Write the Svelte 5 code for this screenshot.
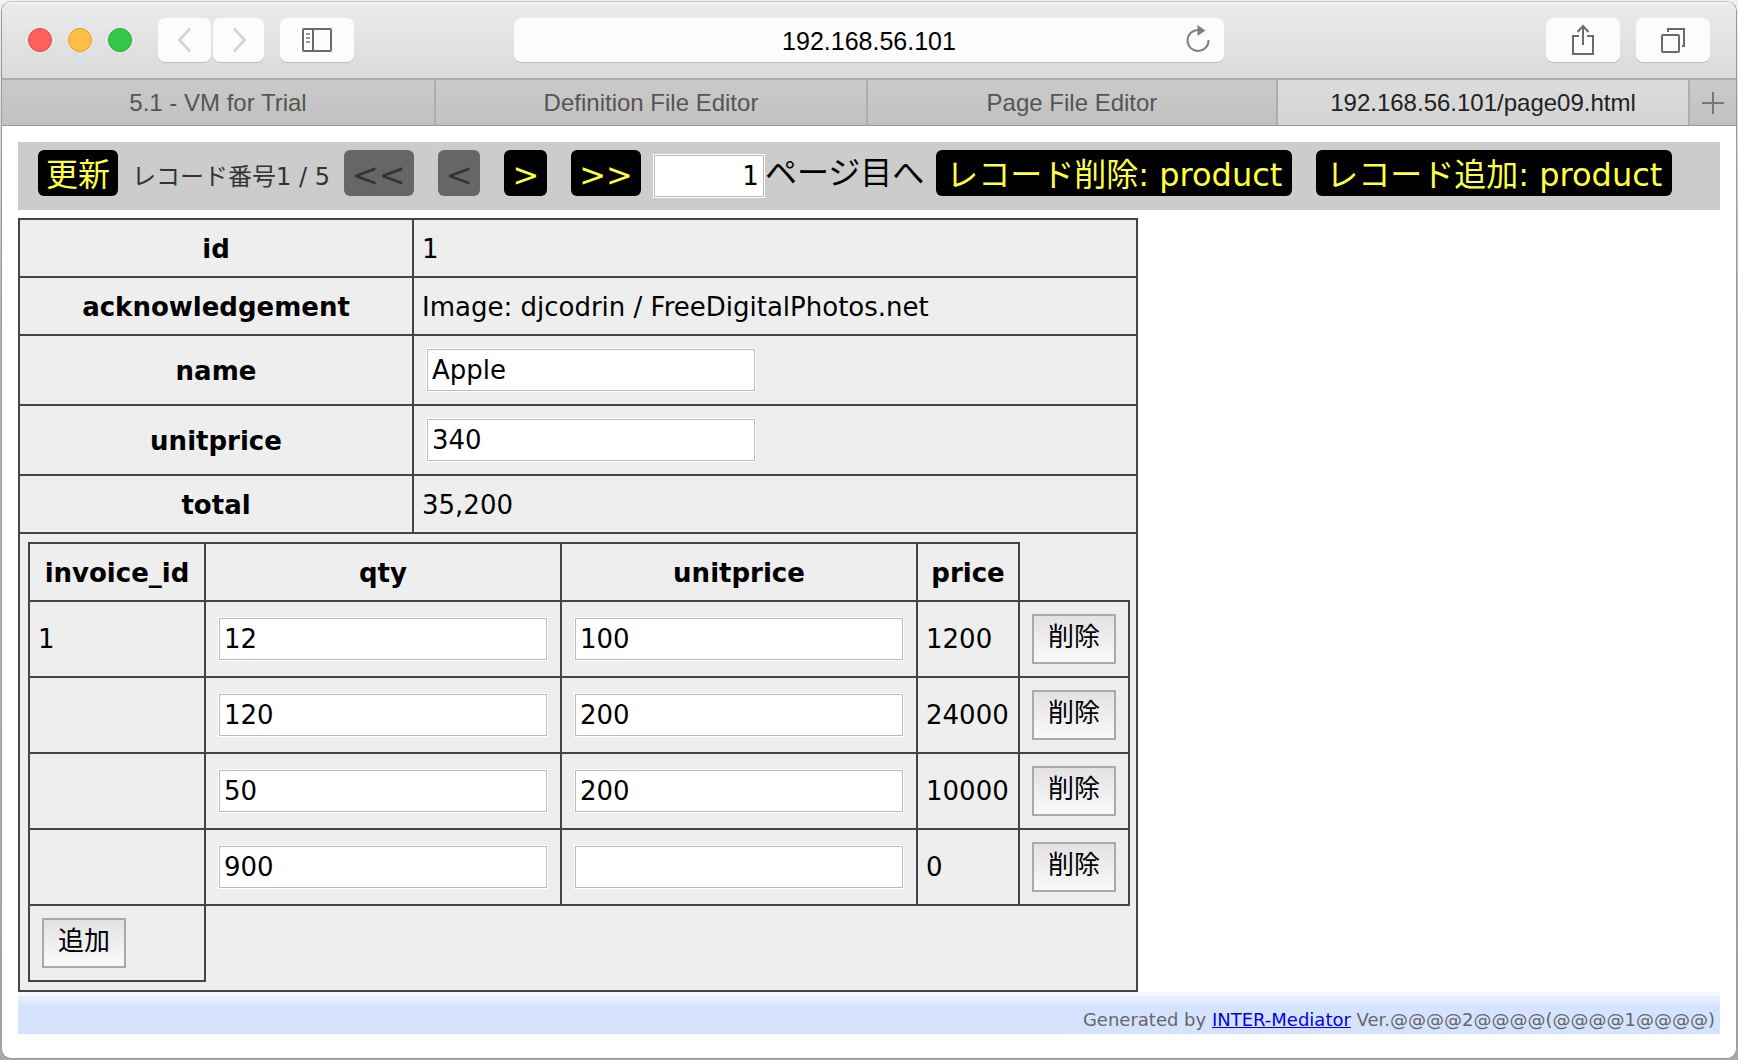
<script>
  const tabs = [
    { title: '5.1 - VM for Trial', active: false },
    { title: 'Definition File Editor', active: false },
    { title: 'Page File Editor', active: false },
    { title: '192.168.56.101/page09.html', active: true }
  ];

  let page = $state('1');
  let product = $state({ name: 'Apple', unitprice: '340' });
  let lines = $state([
    { invoice: '1', qty: '12', unitprice: '100', price: '1200' },
    { invoice: '', qty: '120', unitprice: '200', price: '24000' },
    { invoice: '', qty: '50', unitprice: '200', price: '10000' },
    { invoice: '', qty: '900', unitprice: '', price: '0' }
  ]);
</script>

<div class="window">
  <header class="toolbar">
    <div class="lights">
      <button class="light red" aria-label="Close"></button>
      <button class="light amber" aria-label="Minimize"></button>
      <button class="light green" aria-label="Zoom"></button>
    </div>
    <div class="history">
      <button class="tool back" aria-label="Back">
        <svg width="16" height="28" viewBox="0 0 16 28"><path d="M13 2.500 2.500 14 13 25.500" fill="none" stroke="#d6d6d6" stroke-width="3" /></svg>
      </button>
      <button class="tool forward" aria-label="Forward">
        <svg width="16" height="28" viewBox="0 0 16 28"><path d="M3 2.500 13.500 14 3 25.500" fill="none" stroke="#d6d6d6" stroke-width="3" /></svg>
      </button>
    </div>
    <button class="tool sidebar" aria-label="Sidebar">
      <svg width="32" height="24" viewBox="0 0 32 24" fill="none" stroke="#6b6b6b" stroke-width="2">
        <rect x="2" y="1" width="28" height="22" rx="1" />
        <path d="M12 1v22" />
        <path d="M5 6h4M5 10h4M5 14h4" stroke="#999" />
      </svg>
    </button>
    <div class="address">
      <input aria-label="Address" value="192.168.56.101" />
      <button class="reload" aria-label="Reload">
        <svg width="24" height="28" viewBox="0 0 24 28">
          <path d="M12.500 4A10.500 10.500 0 1 0 22.500 14" fill="none" stroke="#808080" stroke-width="2" />
          <path d="M11.500 -1v11l8-5.500z" fill="#808080" />
        </svg>
      </button>
    </div>
    <div class="actions">
      <button class="tool action" aria-label="Share">
        <svg width="24" height="32" viewBox="0 0 24 32" fill="none" stroke="#6b6b6b" stroke-width="2">
          <path d="M8 12H2v18h20V12h-6M12 21V2M6.500 8 12 2l5.500 6" />
        </svg>
      </button>
      <button class="tool action" aria-label="Show all tabs">
        <svg width="26" height="26" viewBox="0 0 26 26" fill="none" stroke="#6b6b6b" stroke-width="2">
          <rect x="2" y="8" width="17" height="17" rx="1" />
          <path d="M8 5V2h16v17h-2" />
        </svg>
      </button>
    </div>
  </header>

  <nav class="tabs" aria-label="Tabs">
    {#each tabs as tab}
      <button class="tab" class:active={tab.active}>{tab.title}</button>
    {/each}
    <button class="tab" aria-label="New tab">
      <svg width="22" height="22" viewBox="0 0 22 22"><path d="M11 0v22M0 11h22" stroke="#777" stroke-width="2" /></svg>
    </button>
  </nav>

  <main>
    <div class="navigator">
      <button class="nav">更新</button>
      <span class="position">レコード番号1 / 5</span>
      <button class="nav" disabled>&lt;&lt;</button>
      <button class="nav" disabled>&lt;</button>
      <button class="nav">&gt;</button>
      <button class="nav">&gt;&gt;</button>
      <label class="jump"><input class="field page" bind:value={page} />ページ目へ</label>
      <button class="nav wide">レコード削除: product</button>
      <button class="nav wide">レコード追加: product</button>
    </div>

    <table class="record">
      <tbody>
        <tr><th scope="row">id</th><td class="text">1</td></tr>
        <tr><th scope="row">acknowledgement</th><td class="text">Image: djcodrin / FreeDigitalPhotos.net</td></tr>
        <tr>
          <th scope="row"><label for="name">name</label></th>
          <td><input id="name" class="field" bind:value={product.name} /></td>
        </tr>
        <tr>
          <th scope="row"><label for="unitprice">unitprice</label></th>
          <td><input id="unitprice" class="field" bind:value={product.unitprice} /></td>
        </tr>
        <tr><th scope="row">total</th><td class="text">35,200</td></tr>
        <tr>
          <td class="detail" colspan="2">
            <table class="lines">
              <colgroup>
                <col class="c-invoice" /><col class="c-field" /><col class="c-field" /><col class="c-price" /><col class="c-action" />
              </colgroup>
              <thead>
                <tr>
                  <th scope="col">invoice_id</th>
                  <th scope="col">qty</th>
                  <th scope="col">unitprice</th>
                  <th scope="col">price</th>
                </tr>
              </thead>
              <tbody>
                {#each lines as line}
                  <tr>
                    <td>{line.invoice}</td>
                    <td><input class="field" aria-label="qty" bind:value={line.qty} /></td>
                    <td><input class="field" aria-label="unitprice" bind:value={line.unitprice} /></td>
                    <td>{line.price}</td>
                    <td><button class="small">削除</button></td>
                  </tr>
                {/each}
                <tr><td><button class="small">追加</button></td></tr>
              </tbody>
            </table>
          </td>
        </tr>
      </tbody>
    </table>

    <footer>
      Generated by <a href="#inter-mediator">INTER-Mediator</a> Ver.@@@@2@@@@(@@@@1@@@@)
    </footer>
  </main>
</div>

<style>
  :global(body) {
    background: linear-gradient(#f2f2f2, #b4b4b4 30%, #a8a8a8);
  }
  * {
    box-sizing: border-box;
  }
  button,
  input {
    margin: 0;
    font: inherit;
    color: inherit;
  }
  button {
    padding: 0;
    border: 0;
    background: none;
  }
  svg {
    display: block;
    overflow: visible;
  }
  .window {
    min-height: calc(100vh - 2px);
    margin: 1px;
    border: 1px solid #9a9a9a;
    border-top-color: #c4c4c4;
    border-radius: 10px;
    overflow: hidden;
    background: #fff;
    font-family: 'DejaVu Sans', 'Noto Sans CJK JP', sans-serif;
    font-size: 26px;
    line-height: 40px;
    color: #000;
  }

  .toolbar {
    display: flex;
    align-items: center;
    height: 76px;
    padding: 0 26px;
    background: linear-gradient(#f8f8f8, #ebebeb 3px, #dadada);
    font-family: 'Liberation Sans', sans-serif;
  }
  .lights {
    display: flex;
    gap: 16px;
  }
  .light {
    width: 24px;
    height: 24px;
    border-radius: 50%;
  }
  .red {
    background: #fd5f5a;
    border: 1px solid #e2463f;
  }
  .amber {
    background: #fdbe45;
    border: 1px solid #e0a035;
  }
  .green {
    background: #33c84b;
    border: 1px solid #1fab36;
  }
  .tool {
    display: flex;
    align-items: center;
    justify-content: center;
    height: 44px;
    border-radius: 7px;
    background: #fcfcfc;
    box-shadow: 0 1px 0 #bcc0bf;
  }
  .history {
    display: flex;
    gap: 2px;
    margin: 0 16px 0 26px;
  }
  .back {
    width: 53px;
  }
  .forward {
    width: 51px;
  }
  .sidebar {
    width: 74px;
  }
  .address {
    flex: 1;
    display: flex;
    align-items: center;
    height: 44px;
    margin: 0 322px 0 160px;
    padding: 0 14px 0 38px;
    border-radius: 7px;
    background: #fcfcfc;
    box-shadow: 0 1px 0 #bcc0bf;
  }
  .address input {
    flex: 1;
    min-width: 0;
    padding: 2px 0 0;
    border: 0;
    background: none;
    font-size: 25px;
    text-align: center;
  }
  .actions {
    display: flex;
    gap: 16px;
  }
  .action {
    width: 74px;
  }

  .tabs {
    display: grid;
    grid-template-columns: 434fr 432fr 410fr 412fr 46px;
    height: 48px;
    border-top: 2px solid #adadad;
    border-bottom: 1px solid #999;
  }
  .tab {
    display: flex;
    align-items: center;
    justify-content: center;
    border-right: 2px solid #adadad;
    background: linear-gradient(#cacaca, #c1c1c1);
    font-family: 'Liberation Sans', sans-serif;
    font-size: 24px;
    color: #555;
  }
  .tab.active {
    background: linear-gradient(#dcdcdc, #d4d4d4);
    color: #222;
  }
  .tab:last-child {
    border-right: 0;
  }

  main {
    padding: 16px 16px 24px;
  }
  .navigator {
    display: flex;
    align-items: flex-start;
    height: 68px;
    margin-bottom: 8px;
    padding: 8px;
    background: #ccc;
    font-size: 32px;
    line-height: 46px;
    white-space: nowrap;
  }
  .nav {
    min-width: 42px;
    height: 46px;
    margin: 0 12px;
    padding: 2px 8px 0;
    border-radius: 6px;
    background: #000;
    color: #ff4;
  }
  .nav.wide {
    padding: 2px 10px 0;
  }
  .nav:disabled {
    background: #666;
    color: #333;
  }
  .position {
    min-width: 202px;
    padding: 4px 0 0 2px;
    font-size: 24px;
    color: #333;
  }
  .jump {
    display: flex;
  }

  .field {
    display: block;
    width: 328px;
    height: 42px;
    margin: 5px;
    padding: 0 4px;
    border: 1px solid #bbb;
    outline: 1px solid #fff;
    background: #fff;
    line-height: 32px;
  }
  .page {
    width: 110px;
    margin: 5px 1px 0;
    font-size: 26px;
    text-align: right;
  }

  table {
    border-collapse: collapse;
    background: #eee;
  }
  th,
  td {
    padding: 8px;
    border: 2px solid #444;
    text-align: left;
  }
  th {
    text-align: center;
  }
  th,
  td.text {
    padding: 9px 8px 7px;
  }
  .record > tbody > tr > th {
    width: 394px;
  }
  td.detail {
    padding: 8px 6px 8px 8px;
  }
  .lines {
    table-layout: fixed;
    width: 1102px;
  }
  .c-invoice {
    width: 176px;
  }
  .c-field {
    width: 356px;
  }
  .c-price {
    width: 102px;
  }
  .c-action {
    width: 110px;
  }
  .small {
    display: block;
    width: 84px;
    height: 50px;
    margin: 4px;
    padding-bottom: 4px;
    border: 2px solid #aaa;
    background: linear-gradient(#e2e2e2, #f9f9f9);
    line-height: 40px;
  }

  footer {
    padding: 16px 5px 2px;
    background: linear-gradient(#f5f8ff 4px, #e7efff 4px 8px, #dfe9ff 8px 12px, #d6e3ff 12px);
    font-size: 18px;
    line-height: 24px;
    text-align: right;
    color: #666;
  }
  footer a {
    color: #00e;
  }
</style>
